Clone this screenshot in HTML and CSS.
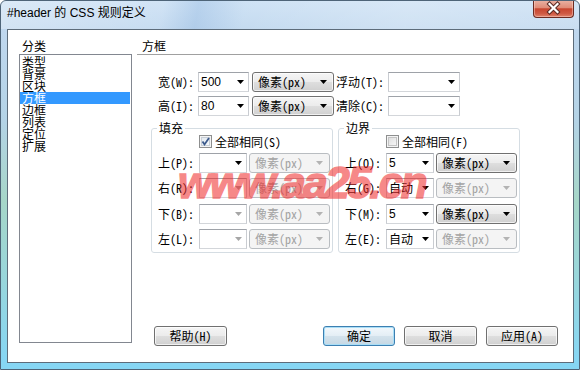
FILE: index.html
```html
<!DOCTYPE html>
<html lang="zh-CN">
<head>
<meta charset="utf-8">
<title>#header 的 CSS 规则定义</title>
<link rel="stylesheet" href="styles.css">
</head>
<body>
<div class="window">
  <div class="titlebar">
    <span class="title">#header 的 CSS 规则定义</span>
    <span class="close">
      <svg width="41" height="18" viewBox="0 0 41 18">
        <path d="M16.5 5 L24.5 13 M24.5 5 L16.5 13" stroke="#5a2a24" stroke-width="4.2" stroke-linecap="square" fill="none"/>
        <path d="M16.5 5 L24.5 13 M24.5 5 L16.5 13" stroke="#ffffff" stroke-width="2.2" stroke-linecap="square" fill="none"/>
      </svg>
    </span>
  </div>
  <div class="client">
    <div class="cat">
      <div class="cat-label">分类</div>
      <ul class="listbox">
        <li>类型</li>
        <li>背景</li>
        <li>区块</li>
        <li class="sel">方框</li>
        <li>边框</li>
        <li>列表</li>
        <li>定位</li>
        <li>扩展</li>
      </ul>
    </div>
    <div class="panel">
      <div class="panel-title">方框</div>
      <div class="row top-row first">
        <span class="lbl lbl-size">宽(W):</span>
        <span class="combo c-size"><span class="num">500</span><i class="arrow"></i></span>
        <span class="unit u-top"><span>像素(px)</span><i class="arrow"></i></span>
        <span class="lbl lbl-float">浮动(T):</span>
        <span class="combo c-float"><i class="arrow"></i></span>
      </div>
      <div class="row top-row">
        <span class="lbl lbl-size">高(I):</span>
        <span class="combo c-size"><span class="num">80</span><i class="arrow"></i></span>
        <span class="unit u-top"><span>像素(px)</span><i class="arrow"></i></span>
        <span class="lbl lbl-float">清除(C):</span>
        <span class="combo c-float"><i class="arrow"></i></span>
      </div>
      <div class="groups">
        <fieldset class="group">
          <legend>填充</legend>
          <div class="check-row"><span class="box checked"><svg width="13" height="13" viewBox="0 0 13 13"><path d="M3.5 6.5 L5.5 9.5 L10 3" stroke="#3c5a8c" stroke-width="1.8" fill="none"/></svg></span>全部相同(S)</div>
          <div class="row grow"><span class="lbl lbl-g">上(P):</span><span class="combo c-g"><i class="arrow"></i></span><span class="unit u-g off"><span>像素(px)</span><i class="arrow"></i></span></div>
          <div class="row grow"><span class="lbl lbl-g">右(R):</span><span class="combo c-g"><i class="arrow dim"></i></span><span class="unit u-g off"><span>像素(px)</span><i class="arrow"></i></span></div>
          <div class="row grow r3"><span class="lbl lbl-g">下(B):</span><span class="combo c-g"><i class="arrow dim"></i></span><span class="unit u-g off"><span>像素(px)</span><i class="arrow"></i></span></div>
          <div class="row grow"><span class="lbl lbl-g">左(L):</span><span class="combo c-g"><i class="arrow dim"></i></span><span class="unit u-g off"><span>像素(px)</span><i class="arrow"></i></span></div>
        </fieldset>
        <fieldset class="group">
          <legend>边界</legend>
          <div class="check-row"><span class="box"></span>全部相同(F)</div>
          <div class="row grow"><span class="lbl lbl-g">上(O):</span><span class="combo c-g"><span class="num">5</span><i class="arrow"></i></span><span class="unit u-g"><span>像素(px)</span><i class="arrow"></i></span></div>
          <div class="row grow"><span class="lbl lbl-g">右(G):</span><span class="combo c-g"><span class="txt">自动</span><i class="arrow"></i></span><span class="unit u-g off"><span>像素(px)</span><i class="arrow"></i></span></div>
          <div class="row grow r3"><span class="lbl lbl-g">下(M):</span><span class="combo c-g"><span class="num">5</span><i class="arrow"></i></span><span class="unit u-g"><span>像素(px)</span><i class="arrow"></i></span></div>
          <div class="row grow"><span class="lbl lbl-g">左(E):</span><span class="combo c-g"><span class="txt">自动</span><i class="arrow"></i></span><span class="unit u-g off"><span>像素(px)</span><i class="arrow"></i></span></div>
        </fieldset>
      </div>
      <div class="buttons">
        <span class="btn b-help">帮助(H)</span>
        <span class="btn b-ok default">确定</span>
        <span class="btn b-cancel">取消</span>
        <span class="btn b-apply">应用(A)</span>
      </div>
    </div>
  </div>
  <div class="watermark">www.aa25.cn</div>
</div>
</body>
</html>
```

FILE: styles.css
```css
* { box-sizing: border-box; }
html, body { margin: 0; padding: 0; }
body {
  width: 580px;
  height: 370px;
  overflow: hidden;
  background: #ffffff;
  font-family: "Noto Sans Mono CJK SC", "Noto Sans CJK SC", sans-serif;
  font-size: 12px;
  color: #000;
}
.window {
  position: relative;
  width: 580px;
  height: 370px;
  display: flex;
  flex-direction: column;
  border: 1px solid #4e6478;
  border-radius: 6px 6px 0 0;
  background: linear-gradient(180deg, #cbe0f4 0px, #bfd7ee 30px, #b4d3e6 120px, #a6d6c8 200px, #98d6dc 280px, #86d6f4 360px);
  overflow: hidden;
}
.titlebar {
  height: 28px;
  display: flex;
  justify-content: space-between;
  align-items: flex-start;
  padding-left: 6px;
  background: linear-gradient(100deg, rgba(255,255,255,0.3) 0%, rgba(255,255,255,0.12) 28%, rgba(150,185,225,0.35) 34%, rgba(255,255,255,0.08) 42%, rgba(255,255,255,0.25) 70%, rgba(255,255,255,0.15) 100%);
}
.title {
  margin-top: 4px;
  line-height: 16px;
  font-family: "Liberation Sans", "Noto Sans CJK SC", sans-serif;
  font-size: 12px;
  color: #000;
}
.close {
  display: block;
  width: 41px;
  height: 18px;
  margin-top: -1px;
  margin-right: 5px;
  border: 1px solid #6b2b22;
  border-top: none;
  border-radius: 0 0 4px 4px;
  background: linear-gradient(180deg, #eab3a5 0%, #e08c78 45%, #c8452f 52%, #cf5a44 80%, #e0836c 100%);
  box-shadow: inset 0 0 0 1px rgba(255,220,210,0.45);
}
.close svg { display: block; margin: -1px 0 0 -1px; }

.client {
  display: flex;
  width: 567px;
  height: 334px;
  margin-left: 6px;
  border: 1px solid #5d6c7a;
  background: #fff;
  padding: 8px 0 0 11px;
}
.cat { width: 113px; display: flex; flex-direction: column; }
.cat-label { height: 16px; line-height: 16px; padding-left: 3px; }
.listbox {
  list-style: none;
  margin: 0;
  padding: 1px 0 0 0;
  height: 289px;
  border: 1px solid #828790;
}
.listbox li {
  height: 12px;
  line-height: 12px;
  padding-left: 2px;
  white-space: nowrap;
}
.listbox li.sel { background: #3399ff; color: #fff; margin-right: 1px; }

.panel {
  margin-left: 5px;
  width: 423px;
  height: 308px;
  display: flex;
  flex-direction: column;
}
.panel-title {
  height: 17px;
  line-height: 16px;
  padding-left: 5px;
  border-bottom: 1px solid #a0a0a0;
}
.row { display: flex; align-items: center; height: 20px; }
.top-row { margin-top: 4px; padding-left: 21px; }
.top-row.first { margin-top: 17px; }
.lbl { white-space: nowrap; line-height: 16px; }
.lbl-size { width: 40px; }
.lbl-float { width: 52px; margin-left: 2px; }
.combo {
  display: flex;
  align-items: center;
  height: 20px;
  background: #fff;
  border: 1px solid;
  border-color: #9ea2a8 #c9ccd1 #d3d6da #c9ccd1;
  padding-left: 2px;
}
.combo .arrow { margin-left: auto; margin-right: 4px; }
.c-size { width: 51px; }
.c-float { width: 72px; }
.num { font-family: "Liberation Sans", sans-serif; font-size: 12px; line-height: 16px; }
.txt { line-height: 16px; }
.arrow {
  display: block;
  width: 7px;
  height: 4px;
  background: #000;
  clip-path: polygon(0 0, 100% 0, 50% 100%);
  flex: none;
}
.arrow.dim { background: #a6a6a6; }
.unit {
  display: flex;
  align-items: center;
  height: 20px;
  padding-left: 5px;
  border: 1px solid #707070;
  border-radius: 3px;
  background: linear-gradient(180deg, #f5f5f5 0%, #ececec 48%, #dedede 52%, #d0d0d0 100%);
  box-shadow: inset 0 0 0 1px rgba(255,255,255,0.7);
  white-space: nowrap;
}
.unit span { line-height: 16px; }
.unit .arrow { margin-left: auto; margin-right: 6px; }
.u-top { width: 82px; margin-left: 3px; }
.unit.off {
  border-color: #b9bdc1;
  background: #f4f4f4;
  box-shadow: none;
  color: #a3a3a3;
}
.unit.off .arrow { background: #b3b3b3; }

.groups {
  display: flex;
  gap: 5px;
  margin-top: 5px;
  padding-left: 14px;
}
.group {
  width: 182px;
  margin: 0;
  padding: 0 2px 3px 6px;
  border: 1px solid #d5dde3;
  border-radius: 3px;
  min-width: 0;
}
.group legend {
  padding: 0 2px;
  margin-left: -1px;
  line-height: 14px;
  height: 14px;
}
.check-row {
  display: flex;
  align-items: center;
  height: 13px;
  padding-left: 41px;
  white-space: nowrap;
}
.box {
  display: block;
  width: 13px;
  height: 13px;
  margin-right: 3px;
  border: 1px solid #8e8f8f;
  background: linear-gradient(135deg, #d9d9d9 0%, #eeeeee 60%, #fbfbfb 100%);
  box-shadow: inset 0 0 0 1px #f4f4f4, inset 0 0 0 2px #c4c4c4;
}
.box.checked {
  background: linear-gradient(135deg, #dfe6ee 0%, #eef2f6 60%, #fbfcfd 100%);
  box-shadow: inset 0 0 0 1px #f4f4f4, inset 0 0 0 2px #c7ced6;
}
.box svg { display: block; margin: -1px; }
.grow { margin-top: 5px; }
.grow.r3 { margin-top: 6px; }
.lbl-g { width: 41px; }
.c-g { width: 48px; }
.u-g { width: 81px; margin-left: 2px; }

.buttons {
  margin-top: auto;
  display: flex;
  height: 20px;
  padding-left: 17px;
  padding-right: 2px;
}
.btn {
  display: flex;
  align-items: center;
  justify-content: center;
  height: 20px;
  border: 1px solid #707070;
  border-radius: 3px;
  background: linear-gradient(180deg, #f5f5f5 0%, #ececec 48%, #dedede 52%, #d0d0d0 100%);
  box-shadow: inset 0 0 0 1px rgba(255,255,255,0.7);
  line-height: 16px;
  white-space: nowrap;
}
.b-help { width: 73px; }
.b-ok { width: 72px; margin-left: auto; }
.b-cancel { width: 73px; margin-left: 9px; }
.b-apply { width: 72px; margin-left: 9px; }
.btn.default {
  border-color: #3c7fb1;
  box-shadow: inset 0 0 0 1px #a9def7;
  background: linear-gradient(180deg, #f2f8fc 0%, #e4eef5 48%, #d3e2ec 52%, #c6d8e4 100%);
}

.watermark {
  position: absolute;
  left: 177px;
  top: 160px;
  font-family: "Liberation Sans", sans-serif;
  font-weight: bold;
  font-style: italic;
  font-size: 44px;
  line-height: 44px;
  letter-spacing: -2.5px;
  color: #f02828;
  -webkit-text-stroke: 1.5px #f02828;
  opacity: 0.55;
  white-space: nowrap;
  pointer-events: none;
}
```
